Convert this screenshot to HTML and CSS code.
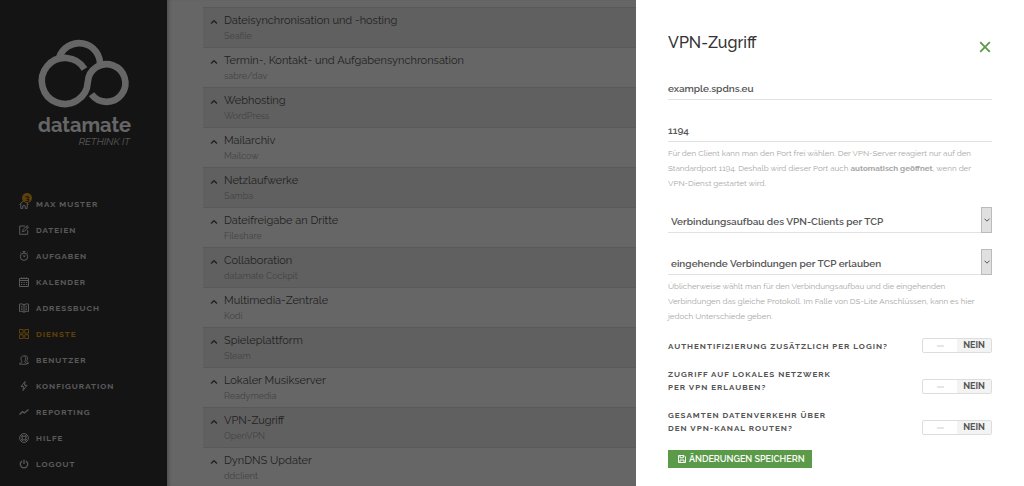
FILE: index.html
```
<!DOCTYPE html>
<html lang="de">
<head>
<meta charset="utf-8">
<meta name="viewport" content="width=device-width, initial-scale=1">
<title>datamate – VPN-Zugriff</title>
<link rel="stylesheet" href="styles.css">
</head>
<body>
<svg class="sprite" aria-hidden="true">
  <symbol id="caret" viewBox="0 0 8 8"><path d="M1 5.500 4 2.700 7 5.500"/></symbol>
  <symbol id="down" viewBox="0 0 8 8"><path d="M1.500 2.700 4 5.200 6.500 2.700"/></symbol>
</svg>
<div class="shell">
  <aside class="sidebar">
    <div class="brand">
      <svg class="brand-mark" viewBox="0 0 92 70" aria-hidden="true">
        <path d="M21 20A21 21 0 0 1 62 28"/>
        <path d="M46.500 31A23 23 0 1 0 49.800 44A18.800 18.800 0 1 1 53.500 56.300"/>
      </svg>
      <div class="brand-name">datamate</div>
      <div class="brand-claim">RETHINK IT</div>
    </div>
    <nav class="nav">
      <a class="nav-link" href="#"><span class="nav-icon"><svg viewBox="0 0 10 10"><path d="M.5 5.500 5 1.500 9.500 5.500M1.800 5V9.400H3.800V6.800Q5 5.400 6.200 6.800V9.400H8.200V5"/></svg><span class="badge">3</span></span>MAX MUSTER</a>
      <a class="nav-link" href="#"><span class="nav-icon"><svg viewBox="0 0 10 10"><path d="M6 1H.7V9.300H8.700V5M3.500 6.700 4 4.700 8 .6 9.500 2 5.500 6.200ZM7 1.700 8.500 3.100"/></svg></span>DATEIEN</a>
      <a class="nav-link" href="#"><span class="nav-icon"><svg viewBox="0 0 10 10"><circle cx="5" cy="5.700" r="3.700"/><path d="M3.600.5H6.400M5 .5V2M5 3.800V6L6.300 5M8 2.200 8.700 1.600M2 2.200 1.300 1.600"/></svg></span>AUFGABEN</a>
      <a class="nav-link" href="#"><span class="nav-icon"><svg viewBox="0 0 10 10"><path d="M.5 1.500H9.500V9.500H.5ZM.5 3.500H9.500M2.500.3V2M5 .3V2M7.500.3V2"/><path d="M2 5.500H8.300M2 7.500H8.300" stroke-dasharray="1.300 1.200"/></svg></span>KALENDER</a>
      <a class="nav-link" href="#"><span class="nav-icon"><svg viewBox="0 0 10 10"><path d="M5 1.800C3.800.8 2 .8.500 1V8.500C2 8.300 3.800 8.300 5 9.300 6.200 8.300 8 8.300 9.500 8.500V1C8 .8 6.200.8 5 1.800V9.300M2 3.200H3.600M2 5H3.600M2 6.700H3.600M6.400 3.200H8M6.400 5H8M6.400 6.700H8"/></svg></span>ADRESSBUCH</a>
      <a class="nav-link active" href="#" aria-current="page"><span class="nav-icon"><svg viewBox="0 0 10 10"><path d="M.5.5H4.200V4.200H.5ZM5.800.5H9.500V4.200H5.800ZM.5 5.800H4.200V9.500H.5ZM5.800 5.800H9.500V9.500H5.800Z"/></svg></span>DIENSTE</a>
      <a class="nav-link" href="#"><span class="nav-icon"><svg viewBox="0 0 10 10"><path d="M.5 9.200C.5 7.700 3 7.700 3 6.500 1.500 4.500 1.500 1 4.500 1S7 4.500 5.700 6.500C5.700 7.700 7.800 7.700 7.800 9.200ZM5.500.7C9 .2 9 4 7.600 6 7.600 7 9.500 7 9.500 8.400H8"/></svg></span>BENUTZER</a>
      <a class="nav-link" href="#"><span class="nav-icon"><svg viewBox="0 0 10 10"><path d="M6 .5 2 5.500H4.500L4 9.500 8 4.300H5.500Z"/></svg></span>KONFIGURATION</a>
      <a class="nav-link" href="#"><span class="nav-icon"><svg viewBox="0 0 10 10"><path class="bold-line" d="M.5 7.500 3.500 4.700 5.300 6 9.500 2.500"/></svg></span>REPORTING</a>
      <a class="nav-link" href="#"><span class="nav-icon"><svg viewBox="0 0 10 10"><circle cx="5" cy="5" r="4.400"/><circle cx="5" cy="5" r="2"/><path d="M1.500 2.500 3.200 4M2.500 1.500 4 3.200M7.500 1.500 6 3.200M8.500 2.500 6.800 4M1.500 7.500 3.200 6M2.500 8.500 4 6.800M7.500 8.500 6 6.800M8.500 7.500 6.800 6"/></svg></span>HILFE</a>
      <a class="nav-link" href="#"><span class="nav-icon"><svg viewBox="0 0 10 10"><path class="bold-line" d="M5 .7V5M3 2.100A3.700 3.700 0 1 0 7 2.100"/></svg></span>LOGOUT</a>
    </nav>
  </aside>
  <main class="content">
    <ul class="services">
      <li class="service"><svg class="caret"><use href="#caret"/></svg><div><h3>Dateisynchronisation und -hosting</h3><p>Seafile</p></div></li>
      <li class="service"><svg class="caret"><use href="#caret"/></svg><div><h3>Termin-, Kontakt- und Aufgabensynchronsation</h3><p>sabre/dav</p></div></li>
      <li class="service"><svg class="caret"><use href="#caret"/></svg><div><h3>Webhosting</h3><p>WordPress</p></div></li>
      <li class="service"><svg class="caret"><use href="#caret"/></svg><div><h3>Mailarchiv</h3><p>Mailcow</p></div></li>
      <li class="service"><svg class="caret"><use href="#caret"/></svg><div><h3>Netzlaufwerke</h3><p>Samba</p></div></li>
      <li class="service"><svg class="caret"><use href="#caret"/></svg><div><h3>Dateifreigabe an Dritte</h3><p>Fileshare</p></div></li>
      <li class="service"><svg class="caret"><use href="#caret"/></svg><div><h3>Collaboration</h3><p>datamate Cockpit</p></div></li>
      <li class="service"><svg class="caret"><use href="#caret"/></svg><div><h3>Multimedia-Zentrale</h3><p>Kodi</p></div></li>
      <li class="service"><svg class="caret"><use href="#caret"/></svg><div><h3>Spieleplattform</h3><p>Steam</p></div></li>
      <li class="service"><svg class="caret"><use href="#caret"/></svg><div><h3>Lokaler Musikserver</h3><p>Readymedia</p></div></li>
      <li class="service"><svg class="caret"><use href="#caret"/></svg><div><h3>VPN-Zugriff</h3><p>OpenVPN</p></div></li>
      <li class="service"><svg class="caret"><use href="#caret"/></svg><div><h3>DynDNS Updater</h3><p>ddclient</p></div></li>
    </ul>
  </main>
</div>
<div class="backdrop"></div>
<form class="drawer" aria-labelledby="drawer-title">
  <header class="drawer-head">
    <h2 id="drawer-title">VPN-Zugriff</h2>
    <button class="close" type="button" aria-label="Schließen"><svg viewBox="0 0 12 12"><path d="M1.200 1.200 10.800 10.800M10.800 1.200 1.200 10.800"/></svg></button>
  </header>
  <div class="field">
    <input class="control" type="text" aria-label="Hostname" value="example.spdns.eu">
  </div>
  <div class="field">
    <input class="control" type="text" aria-label="Port" value="1194">
    <p class="help">Für den Client kann man den Port frei wählen. Der VPN-Server reagiert nur auf den<br>Standardport 1194. Deshalb wird dieser Port auch <strong>automatisch geöffnet</strong>, wenn der<br>VPN-Dienst gestartet wird.</p>
  </div>
  <div class="field">
    <div class="select-wrap"><select class="control select" aria-label="Verbindungsaufbau"><option>Verbindungsaufbau des VPN-Clients per TCP</option></select><span class="select-arrow"><svg><use href="#down"/></svg></span></div>
  </div>
  <div class="field">
    <div class="select-wrap"><select class="control select" aria-label="Eingehende Verbindungen"><option>eingehende Verbindungen per TCP erlauben</option></select><span class="select-arrow"><svg><use href="#down"/></svg></span></div>
    <p class="help">Üblicherweise wählt man für den Verbindungsaufbau und die eingehenden<br>Verbindungen das gleiche Protokoll. Im Falle von DS-Lite Anschlüssen, kann es hier<br>jedoch Unterschiede geben.</p>
  </div>
  <div class="options">
    <label class="option"><span>AUTHENTIFIZIERUNG ZUSÄTZLICH PER LOGIN?</span><span class="switch"><input type="checkbox"><span class="switch-off"></span><span class="switch-text">NEIN</span></span></label>
    <label class="option"><span>ZUGRIFF AUF LOKALES NETZWERK<br>PER VPN ERLAUBEN?</span><span class="switch"><input type="checkbox"><span class="switch-off"></span><span class="switch-text">NEIN</span></span></label>
    <label class="option"><span>GESAMTEN DATENVERKEHR ÜBER<br>DEN VPN-KANAL ROUTEN?</span><span class="switch"><input type="checkbox"><span class="switch-off"></span><span class="switch-text">NEIN</span></span></label>
  </div>
  <button class="save" type="submit"><svg viewBox="0 0 8 8"><path d="M.5.500H6L7.500 2V7.500H.5ZM2 .5V2.800H5.300V.5M2 7.500V5H6V7.500"/></svg>ÄNDERUNGEN SPEICHERN</button>
</form>
</body>
</html>
```
FILE: styles.css
```
* { box-sizing: border-box; }

body {
  margin: 0;
  height: 100vh;
  overflow: hidden;
  background: #fff;
  color: #555;
  font-family: Raleway, Lato, sans-serif;
  font-size: 11px;
}

h2, h3, p, ul { margin: 0; padding: 0; }
button, input, select { font: inherit; color: inherit; }
svg { fill: none; stroke: currentColor; }
.sprite { position: absolute; width: 0; height: 0; }

.shell { display: flex; height: 100%; }

.sidebar {
  flex: 0 0 167px;
  padding-top: 38px;
  background: #343434;
  color: #fff;
}
.brand { width: 92px; margin-left: 38px; }
.brand-mark { display: block; width: 92px; height: 70px; overflow: visible; stroke-width: 6.600; }
.brand-name { font-size: 20px; line-height: 24px; margin-top: 5px; font-weight: 700; }
.brand-claim { font-size: 10px; line-height: 10px; font-style: italic; font-weight: 300; text-align: right; }

.nav { margin-top: 44px; padding-left: 19px; }
.nav-link {
  display: flex;
  align-items: center;
  gap: 7px;
  height: 26px;
  color: #dedede;
  font-size: 8px;
  font-weight: 700;
  letter-spacing: 1px;
  text-decoration: none;
}
.nav-link.active { color: #e8a317; }
.nav-icon { position: relative; display: flex; }
.nav-icon svg { width: 10px; height: 10px; stroke-width: 1; }
.nav-icon .bold-line { stroke-width: 1.3; }
.badge {
  position: absolute;
  top: -6px;
  left: 3px;
  width: 10px;
  height: 10px;
  border-radius: 50%;
  background: #e8a317;
  color: #343434;
  font-size: 8px;
  line-height: 10px;
  letter-spacing: 0;
  text-align: center;
}

.content {
  flex: 1;
  padding: 7px 0 0 36px;
  box-shadow: inset 4px 0 4px -3px #aaa;
}
.services { list-style: none; }
.service {
  display: flex;
  gap: 6px;
  height: 40px;
  padding: 5px 0 0 7px;
  border-top: 1px solid #dedede;
}
.service:nth-child(odd) { background: #f0f0f0; }
.service h3 { color: #555; font-size: 11px; line-height: 16px; font-weight: 400; }
.service p { color: #aaa; font-size: 9px; line-height: 14px; }
.caret { width: 8px; height: 8px; margin-top: 5px; color: #555; stroke-width: 1.500; }

.backdrop { position: fixed; inset: 0; background: rgba(0, 0, 0, .6); }

.drawer {
  position: fixed;
  inset: 0 0 0 auto;
  width: 388px;
  padding: 32px;
  background: #fff;
}
.drawer-head { display: flex; justify-content: space-between; height: 42px; }
.drawer-head h2 { font-size: 16px; line-height: 22px; font-weight: 500; color: #333; }
.close { display: flex; align-self: flex-start; margin-top: 8px; padding: 1px; border: 0; background: none; color: #5b9a48; }
.close svg { width: 12px; height: 12px; stroke-width: 1.800; }

.field { margin-bottom: 16px; }
.control {
  display: block;
  width: 100%;
  height: 26px;
  padding: 4px 0 0;
  border: 0;
  border-bottom: 1px solid #e2e2e2;
  border-radius: 0;
  background: none;
  font-size: 10px;
  font-weight: 600;
}
.help { color: #a6a6a6; font-size: 8px; line-height: 15px; padding-top: 4px; }
.select-wrap { position: relative; }
.select { appearance: none; padding: 4px 16px 0 3px; }
.select-arrow {
  position: absolute;
  top: 0;
  right: 0;
  display: flex;
  align-items: center;
  justify-content: center;
  width: 11px;
  height: 26px;
  border: 1px solid #bbb;
  background: #e0e0e0;
  pointer-events: none;
}
.select-arrow svg { flex: none; width: 8px; height: 8px; }

.options { display: flex; flex-direction: column; gap: 15px; margin-top: 14px; }
.field:has(+ .options) { margin-bottom: 0; }
.option {
  display: flex;
  align-items: flex-end;
  justify-content: space-between;
  font-size: 8px;
  line-height: 13px;
  font-weight: 700;
  letter-spacing: 1px;
}
.switch {
  position: relative;
  display: flex;
  width: 70px;
  height: 15px;
  border: 1px solid #ddd;
  border-radius: 2px;
}
.switch input { position: absolute; inset: 0; width: 100%; height: 100%; margin: 0; opacity: 0; }
.switch-off { display: flex; flex: 1; align-items: center; justify-content: center; }
.switch-off::before { content: ""; width: 7px; height: 2px; background: #e6e6e6; }
.switch-text { flex: 1; background: #f3f3f3; font-size: 9px; letter-spacing: 0; text-align: center; }

.save {
  display: flex;
  align-items: center;
  gap: 3px;
  height: 18px;
  margin-top: 15px;
  padding: 0 7px 0 10px;
  border: 0;
  background: #5b9a48;
  color: #fff;
  font-size: 9px;
  font-weight: 600;
}
.save svg { width: 8px; height: 8px; }
```
